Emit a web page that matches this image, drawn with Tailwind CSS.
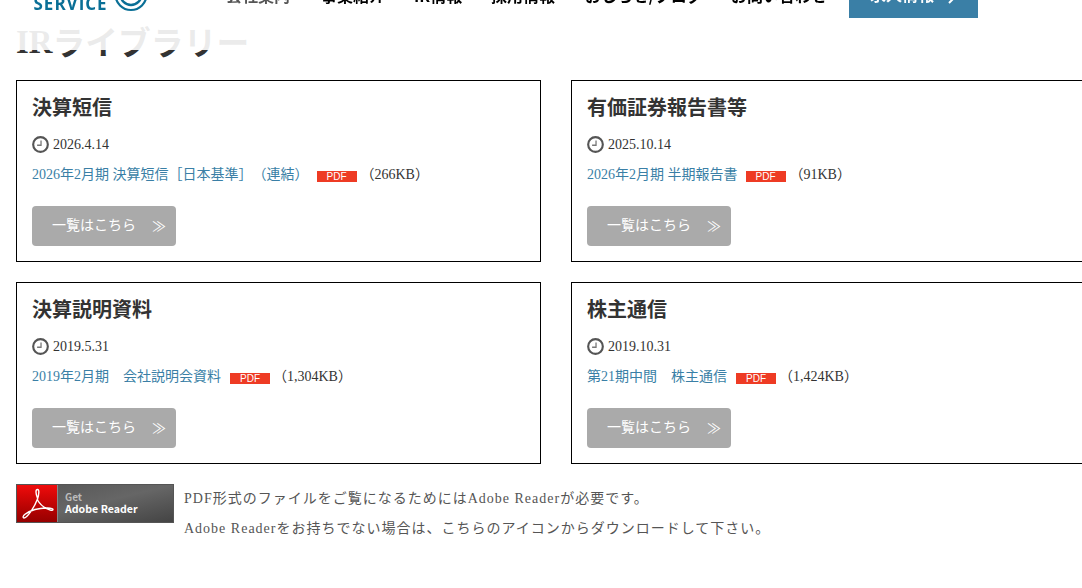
<!DOCTYPE html>
<html lang="ja">

<head>
    <meta charset="UTF-8">
    <meta name="viewport" content="width=device-width, initial-scale=1.0">
    <script src="https://cdn.jsdelivr.net/npm/@tailwindcss/browser@4"></script>
    <title>IRライブラリー</title>
</head>

<body class="h-[588px] overflow-hidden bg-white font-['Liberation_Serif','Noto_Sans_CJK_JP',serif] text-sm text-[#333] [text-spacing-trim:space-all]">
    <svg class="hidden">
        <symbol id="clock" viewBox="0 0 16 16">
            <circle cx="8" cy="8" r="6.900" fill="none" stroke="#555" stroke-width="2" />
            <path d="M8.5 4.2V8.7H4.8" fill="none" stroke="#777" stroke-width="1.2" />
        </symbol>
    </svg>

    <!-- 固定ヘッダー -->
    <header class="fixed inset-x-0 top-0 z-10 h-[50px] overflow-hidden bg-white/90 font-['Noto_Sans_CJK_JP',sans-serif]">
        <div class="-mt-[22px] flex h-10 items-start">
            <div class="flex w-[226px] shrink-0 pl-[33.500px]">
                <span class="mt-[14px] w-20 font-['Open_Sans',sans-serif] text-[17px] leading-6 font-bold tracking-[1px] text-[#0a6f96]">SERVICE</span>
                <svg class="h-[34px] w-[34px]" viewBox="0 0 34 34" fill="none" stroke="#0a6f96">
                    <circle cx="17" cy="16.500" r="15.5" stroke-width="2.2" />
                    <circle cx="17" cy="16.500" r="10.500" stroke-width="2.4" />
                </svg>
            </div>
            <nav class="flex shrink-0 text-base leading-[35px] font-bold whitespace-nowrap text-black">
                <a href="#" class="w-[95px] text-[#555]">会社案内</a>
                <a href="#" class="w-[93px]">事業紹介</a>
                <a href="#" class="w-[77px]">IR情報</a>
                <a href="#" class="w-[94px]">採用情報</a>
                <a href="#" class="w-[146px]">おしらせ/ブログ</a>
                <a href="#" class="w-[118px]">お問い合わせ</a>
            </nav>
            <a href="#" class="flex h-10 w-[129px] shrink-0 items-start bg-[#3a7fa6] pl-[21px] text-base leading-8 font-bold text-white">
                求人情報
                <svg class="mt-[12px] ml-3 h-3.5 w-3" viewBox="0 0 12 14" fill="none" stroke="#fff" stroke-width="2">
                    <path d="M3 1l6 6-6 6" />
                </svg>
            </a>
        </div>
    </header>

    <main class="w-[1112px] px-4 pt-[19px]">
        <h1 class="mb-[15px] h-[46px] text-[32.8px] leading-[46px] font-bold">IR<span class="inline-block translate-y-[1.5px]">ライブラリー</span></h1>

        <div class="grid grid-cols-[525px_525px] gap-x-[30px] gap-y-5">
            <section class="h-[182px] border border-black p-[15px]">
                <h2 class="pt-px mb-[10px] text-xl leading-[22px] font-bold">決算短信</h2>
                <p class="flex h-[30px] items-center gap-1"><svg class="h-[17px] w-[17px]"><use href="#clock" /></svg><span class="pt-0.5">2026.4.14</span></p>
                <p class="flex h-[30px] items-center">
                    <a href="#" class="pt-0.5 text-[#3a7fa6]">2026年2月期 決算短信［日本基準］（連結）</a>
                    <span class="mt-1 ml-2 h-[11px] w-10 bg-[#ee3b24] text-center font-['Liberation_Sans',sans-serif] text-[10px] leading-[11px] text-white">PDF</span>
                    <span class="ml-1 pt-0.5">（266KB）</span>
                </p>
                <a href="#" class="mt-[17px] flex h-10 w-36 items-center justify-between rounded bg-[#aaa] pr-2.5 pl-5 text-white">一覧はこちら<span class="pt-0.5">≫</span></a>
            </section>

            <section class="h-[182px] border border-black p-[15px]">
                <h2 class="pt-px mb-[10px] text-xl leading-[22px] font-bold">有価証券報告書等</h2>
                <p class="flex h-[30px] items-center gap-1"><svg class="h-[17px] w-[17px]"><use href="#clock" /></svg><span class="pt-0.5">2025.10.14</span></p>
                <p class="flex h-[30px] items-center">
                    <a href="#" class="pt-0.5 text-[#3a7fa6]">2026年2月期 半期報告書</a>
                    <span class="mt-1 ml-2 h-[11px] w-10 bg-[#ee3b24] text-center font-['Liberation_Sans',sans-serif] text-[10px] leading-[11px] text-white">PDF</span>
                    <span class="ml-1 pt-0.5">（91KB）</span>
                </p>
                <a href="#" class="mt-[17px] flex h-10 w-36 items-center justify-between rounded bg-[#aaa] pr-2.5 pl-5 text-white">一覧はこちら<span class="pt-0.5">≫</span></a>
            </section>

            <section class="h-[182px] border border-black p-[15px]">
                <h2 class="pt-px mb-[10px] text-xl leading-[22px] font-bold">決算説明資料</h2>
                <p class="flex h-[30px] items-center gap-1"><svg class="h-[17px] w-[17px]"><use href="#clock" /></svg><span class="pt-0.5">2019.5.31</span></p>
                <p class="flex h-[30px] items-center">
                    <a href="#" class="pt-0.5 text-[#3a7fa6]">2019年2月期　会社説明会資料</a>
                    <span class="mt-1 ml-[9px] h-[11px] w-10 bg-[#ee3b24] text-center font-['Liberation_Sans',sans-serif] text-[10px] leading-[11px] text-white">PDF</span>
                    <span class="ml-[3px] pt-0.5">（1,304KB）</span>
                </p>
                <a href="#" class="mt-[17px] flex h-10 w-36 items-center justify-between rounded bg-[#aaa] pr-2.5 pl-5 text-white">一覧はこちら<span class="pt-0.5">≫</span></a>
            </section>

            <section class="h-[182px] border border-black p-[15px]">
                <h2 class="pt-px mb-[10px] text-xl leading-[22px] font-bold">株主通信</h2>
                <p class="flex h-[30px] items-center gap-1"><svg class="h-[17px] w-[17px]"><use href="#clock" /></svg><span class="pt-0.5">2019.10.31</span></p>
                <p class="flex h-[30px] items-center">
                    <a href="#" class="pt-0.5 text-[#3a7fa6]">第21期中間　株主通信</a>
                    <span class="mt-1 ml-[9px] h-[11px] w-10 bg-[#ee3b24] text-center font-['Liberation_Sans',sans-serif] text-[10px] leading-[11px] text-white">PDF</span>
                    <span class="ml-[3px] pt-0.5">（1,424KB）</span>
                </p>
                <a href="#" class="mt-[17px] flex h-10 w-36 items-center justify-between rounded bg-[#aaa] pr-2.5 pl-5 text-white">一覧はこちら<span class="pt-0.5">≫</span></a>
            </section>
        </div>

        <!-- Adobe Reader の案内 -->
        <div class="mt-5 flex gap-2.5">
            <a href="#" class="flex h-[39px] w-[158px] shrink-0 border border-[#555] bg-linear-to-br from-[#555] via-[#666] to-[#444] font-['Noto_Sans_CJK_JP',sans-serif]">
                <span class="flex w-10 items-center justify-center bg-linear-to-b from-[#f00c0c] to-[#960000]">
                    <svg class="h-8 w-9" viewBox="0 0 36 32" fill="none" stroke="#fff" stroke-width="1.4">
                        <path d="M18.500 10C16.500 5 16.500 1.5 18.500 1.5S20 6 18.500 11C15 20 8 30 5 30C2 29 7 24 16 21.500C25 19 34 20 34 21.500C33.500 24 23 20 18.500 12Z" />
                    </svg>
                </span>
                <span class="flex flex-col border-l border-[#888] pt-1.5 pl-[7px] text-[10.600px] leading-3 font-bold">
                    <span class="text-[10px] text-[#bbb]">Get</span>
                    <span class="text-white">Adobe Reader</span>
                </span>
            </a>
            <p class="leading-[30px] tracking-[1px] whitespace-nowrap text-[#555]">
                PDF形式のファイルをご覧になるためにはAdobe Readerが必要です。<br>
                Adobe Readerをお持ちでない場合は、こちらのアイコンからダウンロードして下さい。
            </p>
        </div>
    </main>
</body>

</html>
